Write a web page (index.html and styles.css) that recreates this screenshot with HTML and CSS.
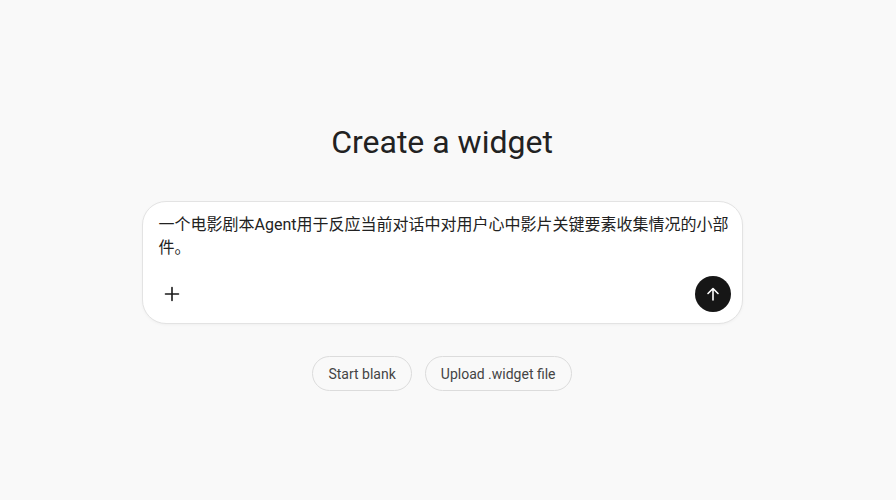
FILE: index.html
```html
<!DOCTYPE html>
<html>
<head>
  <meta charset="UTF-8">
  <title>Create a widget</title>
  <link rel="stylesheet" href="styles.css">
</head>
<body>
  <main class="page">
    <h1 class="title">Create a widget</h1>
    <div class="composer">
      <div class="prompt">一个电影剧本Agent用于反应当前对话中对用户心中影片关键要素收集情况的小部件。</div>
      <div class="composer-bar">
        <button class="icon-btn" aria-label="Add">
          <svg width="16" height="16" viewBox="0 0 16 16" fill="none" stroke="#1a1a1a" stroke-width="1.6" stroke-linecap="round"><path d="M8 1.5v13M1.5 8h13"/></svg>
        </button>
        <button class="send-btn" aria-label="Send">
          <svg width="16" height="16" viewBox="0 0 16 16" fill="none" stroke="#fff" stroke-width="1.6" stroke-linecap="round" stroke-linejoin="round"><path d="M8 14V2.5M3 7.5L8 2.5l5 5"/></svg>
        </button>
      </div>
    </div>
    <div class="actions">
      <button class="pill">Start blank</button>
      <button class="pill">Upload .widget file</button>
    </div>
  </main>
</body>
</html>
```

FILE: styles.css
```css
body {
  margin: 0;
  background: #f9f9f9;
  font-family: Roboto, "Noto Sans CJK SC", sans-serif;
  color: #1a1a1a;
}

.page {
  display: flex;
  flex-direction: column;
  align-items: center;
  padding-top: 122px;
  padding-right: 12px;
}

.title {
  margin: 0;
  font-size: 32px;
  font-weight: 400;
  line-height: 40px;
  color: #222;
}

.composer {
  margin-top: 39px;
  width: 601px;
  height: 123px;
  box-sizing: border-box;
  background: #fff;
  border: 1px solid #e3e3e3;
  border-radius: 24px;
  box-shadow: 0 1px 3px rgba(0, 0, 0, 0.04);
  padding: 11px 12px 11px 16px;
  display: flex;
  flex-direction: column;
}

.prompt {
  font-size: 16px;
  line-height: 23px;
  color: #222;
  flex: 1;
}

.composer-bar {
  display: flex;
  justify-content: space-between;
  align-items: center;
}

.icon-btn {
  width: 28px;
  height: 28px;
  padding: 0;
  margin-left: -1px;
  border: none;
  background: none;
  display: flex;
  align-items: center;
  justify-content: center;
}

.send-btn {
  width: 36px;
  height: 36px;
  padding: 0;
  margin-right: -1px;
  border: none;
  border-radius: 50%;
  background: #161616;
  display: flex;
  align-items: center;
  justify-content: center;
}

.actions {
  margin-top: 32px;
  display: flex;
  gap: 13px;
}

.pill {
  height: 35px;
  padding: 0 15px;
  background: #f9f9f9;
  border: 1px solid #dcdcdc;
  border-radius: 18px;
  font-family: Roboto, sans-serif;
  font-size: 14px;
  color: #444;
}
```
